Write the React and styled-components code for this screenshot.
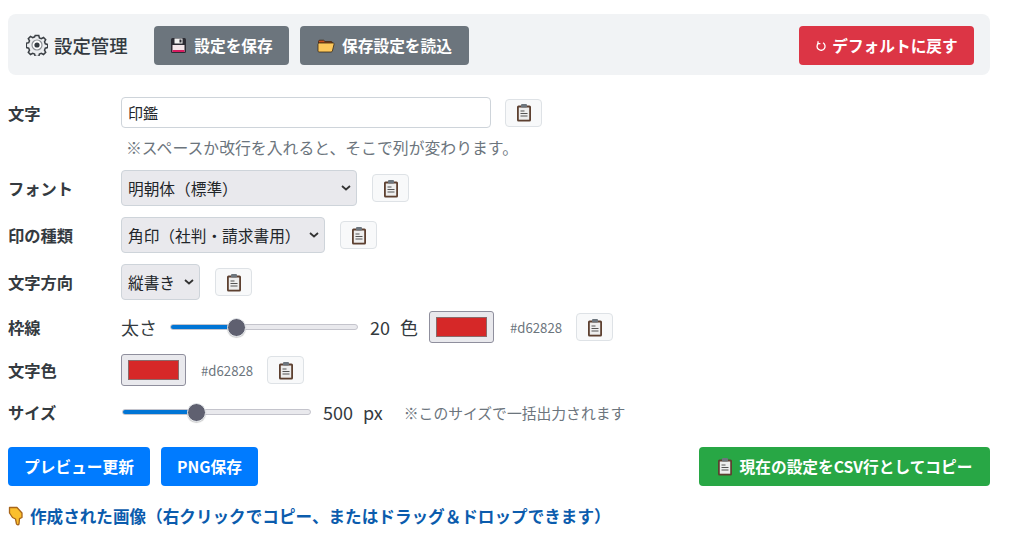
import React from 'react';
import styled, { createGlobalStyle } from 'styled-components';

const Global = createGlobalStyle`
  html, body { margin: 0; padding: 0; background: #fff; }
  body {
    font-family: "Noto Sans CJK JP", "Noto Sans", sans-serif;
    color: #212529;
    font-size: 16px;
    overflow: hidden;
  }
`;

const chevron = "data:image/svg+xml,%3Csvg xmlns='http://www.w3.org/2000/svg' width='10' height='6'%3E%3Cpath d='M1 1l4 3.500L9 1' fill='none' stroke='%23333' stroke-width='1.800'/%3E%3C/svg%3E";

const Page = styled.div`
  width: 982px;
  padding: 14px 0 0 8px;
`;

const Panel = styled.div`
  display: flex;
  align-items: center;
  height: 61px;
  box-sizing: border-box;
  padding: 2px 16px 0 18px;
  margin-bottom: 22px;
  background: #f1f3f5;
  border-radius: 8px;
`;

const PanelTitle = styled.div`
  display: flex;
  align-items: center;
  gap: 6px;
  width: 128px;
  margin-bottom: 2px;
  font-size: 18.400px;
  font-weight: 500;
  color: #343a40;
`;

const Btn = styled.button`
  display: inline-flex;
  align-items: center;
  justify-content: center;
  gap: ${p => p.$gap ?? 7}px;
  height: 39px;
  width: ${p => p.$w}px;
  margin-left: ${p => p.$ml || 0}px;
  padding: 0;
  border: 0;
  border-radius: 4px;
  background: ${p => p.$bg};
  color: #fff;
  font-family: inherit;
  font-size: 15.700px;
  font-weight: 700;
`;

const Row = styled.div`
  display: flex;
  align-items: center;
  min-height: ${p => p.$h || 36}px;
  margin-bottom: ${p => p.$mb ?? 11}px;
`;

const Label = styled.div`
  width: 113px;
  flex: none;
  font-size: 16.300px;
  font-weight: 700;
  color: #343a40;
`;

const TextInput = styled.input`
  width: 370px;
  height: 31px;
  box-sizing: border-box;
  padding: 0 6px;
  border: 1px solid #ced4da;
  border-radius: 4px;
  font-family: inherit;
  font-size: 15px;
  color: #212529;
`;

const Hint = styled.div`
  margin: 7px 0 10px 118px;
  font-size: 15.850px;
  line-height: 25px;
  color: #6c757d;
`;

const Select = styled.select`
  -webkit-appearance: none;
  appearance: none;
  width: ${p => p.$w}px;
  height: 36px;
  box-sizing: border-box;
  padding: 0 6px;
  border: 1px solid #ced4da;
  border-radius: 4px;
  background: #e9e9ed url("${chevron}") no-repeat right 5px center;
  font-family: inherit;
  font-size: 15.700px;
  color: #212529;
`;

const CopyBtn = styled.button`
  display: inline-flex;
  align-items: center;
  justify-content: center;
  width: 37px;
  height: 28px;
  margin-left: ${p => p.$ml}px;
  padding: 0;
  border: 1px solid #dee2e6;
  border-radius: 4px;
  background: #f8f9fa;
`;

const Text = styled.span`
  font-size: ${p => p.$size || 18}px;
  color: ${p => p.$color || '#343a40'};
  margin-left: ${p => p.$ml || 0}px;
`;

const Slider = styled.input`
  -webkit-appearance: none;
  appearance: none;
  width: ${p => p.$w}px;
  height: 20px;
  margin: 0 0 0 ${p => p.$ml || 0}px;
  background: transparent;
  &::-webkit-slider-runnable-track {
    height: 6px;
    border-radius: 3px;
    border: 1px solid #c4c4cc;
    background: linear-gradient(to right, #0075d5 var(--fill), #e9e9ed var(--fill));
  }
  &::-webkit-slider-thumb {
    -webkit-appearance: none;
    width: 19px;
    height: 19px;
    margin-top: -7.500px;
    border-radius: 50%;
    border: 1px solid #e9ecef;
    background: #5f6070;
    box-shadow: 0 1px 1px rgba(0,0,0,.2);
  }
`;

const Swatch = styled.div`
  width: 65px;
  height: 32px;
  box-sizing: border-box;
  margin-left: ${p => p.$ml || 0}px;
  padding: 5px 6px;
  border: 1px solid #8f8f9d;
  border-radius: 3px;
  background: #e9e9ed;
`;

const SwatchColor = styled.div`
  height: 100%;
  background: #d62828;
  border: 1px solid #8a6a6a;
  box-sizing: border-box;
`;

const Hex = styled.span`
  margin-left: ${p => p.$ml}px;
  font-size: 13.200px;
  color: #6c757d;
`;

const Actions = styled.div`
  display: flex;
  align-items: center;
  margin: 20px 0 18px;
`;

const Spacer = styled.div`
  flex: 1;
`;

const Heading = styled.div`
  display: flex;
  align-items: center;
  gap: 6px;
  font-size: 16.600px;
  font-weight: 700;
  color: #0b5cad;
`;

const GearIcon = () => (
  <svg width="22" height="22" viewBox="0 0 22 22">
    <path d="M9.200 1.500h3.600l.6 2.400 1.900.8 2.200-1.200 2.200 2.200-1.200 2.200.8 1.900 2.400.6v3.200l-2.400.6-.8 1.900 1.200 2.200-2.200 2.200-2.200-1.200-1.900.8-.6 2.400H9.200l-.6-2.400-1.900-.8-2.200 1.200-2.200-2.200 1.200-2.200-.8-1.900-2.400-.6V9.300l2.400-.6.8-1.900-1.200-2.200 2.200-2.200 2.200 1.200 1.900-.8z" fill="#eceef0" stroke="#3a3f44" strokeWidth="1.500" />
    <circle cx="11" cy="11" r="5" fill="#fff" stroke="#8d9196" strokeWidth="1.200" />
    <circle cx="11" cy="11" r="2.600" fill="#343a40" />
  </svg>
);

const FloppyIcon = () => (
  <svg width="17" height="17" viewBox="0 0 17 17">
    <rect x="1" y="1" width="15" height="15" rx="1.500" fill="#2b2b33" />
    <rect x="2.500" y="8" width="12" height="7" fill="#f3e6ea" />
    <rect x="2.500" y="13" width="12" height="2" fill="#d81b60" />
    <rect x="4.500" y="1.500" width="8" height="5" fill="#f1f1f1" />
    <rect x="9.500" y="2.500" width="2" height="3" fill="#2b2b33" />
  </svg>
);

const FolderIcon = () => (
  <svg width="18" height="15" viewBox="0 0 18 15">
    <path d="M1.500 5V3.500C1.500 2.700 2 2.200 2.800 2.200h3.700l1.500 1.300h6c.8 0 1.300.5 1.300 1.300V5z" fill="#c8501e" stroke="#3b2a12" strokeWidth=".8" />
    <path d="M1 13V6.500C1 5.700 1.600 5 2.500 5h13.500c.8 0 1.300.6 1 1.300L15.400 13c-.2.600-.7 1-1.300 1H2c-.6 0-1-.4-1-1z" fill="#fdc85c" stroke="#3b2a12" strokeWidth=".8" />
  </svg>
);

const RefreshIcon = () => (
  <svg width="12" height="12" viewBox="0 0 12 12" fill="none" stroke="#fff" strokeWidth="1.300">
    <path d="M3.300 3.400A4 4 0 1 0 8 2.800" />
    <path d="M3 1.200v2.400h2.400" />
  </svg>
);

const ClipIcon = () => (
  <svg width="16" height="19" viewBox="0 0 16 19">
    <rect x="1" y="2.500" width="14" height="16" rx="1.500" fill="#5d4030" />
    <rect x="2.800" y="4.500" width="10.400" height="12.200" fill="#eeeeee" />
    <rect x="5" y="1" width="6" height="3.500" rx="1" fill="#6c757d" />
    <path d="M4.500 8h4M4.500 10.500h7M4.500 13h7" stroke="#555" strokeWidth="1.100" />
  </svg>
);

const HandIcon = () => (
  <svg width="16" height="20" viewBox="0 0 16 20">
    <path d="M1.500 1.500h7.500l5 5.500v4.500l-2.500 1.200-.5 5.300c-.3 1-2 1-2.500 0L7.500 13 4.500 11.500 1.500 7z" fill="#fbbf2d" stroke="#a8651a" strokeWidth="1.300" strokeLinejoin="round" />
  </svg>
);

export default function App() {
  return (
    <Page>
      <Global />
      <Panel>
        <PanelTitle><GearIcon />設定管理</PanelTitle>
        <Btn $bg="#6c757d" $w={135}><FloppyIcon />設定を保存</Btn>
        <Btn $bg="#6c757d" $w={169} $ml={11}><FolderIcon />保存設定を読込</Btn>
        <Spacer />
        <Btn $bg="#dc3545" $w={175} $gap={5}><RefreshIcon />デフォルトに戻す</Btn>
      </Panel>

      <Row $h={31} $mb={0}>
        <Label>文字</Label>
        <TextInput defaultValue="印鑑" />
        <CopyBtn $ml={14}><ClipIcon /></CopyBtn>
      </Row>
      <Hint>※スペースか改行を入れると、そこで列が変わります。</Hint>

      <Row>
        <Label>フォント</Label>
        <Select $w={236}><option>明朝体（標準）</option></Select>
        <CopyBtn $ml={15}><ClipIcon /></CopyBtn>
      </Row>
      <Row>
        <Label>印の種類</Label>
        <Select $w={204}><option>角印（社判・請求書用）</option></Select>
        <CopyBtn $ml={15}><ClipIcon /></CopyBtn>
      </Row>
      <Row>
        <Label>文字方向</Label>
        <Select $w={79}><option>縦書き</option></Select>
        <CopyBtn $ml={15}><ClipIcon /></CopyBtn>
      </Row>
      <Row $h={32}>
        <Label>枠線</Label>
        <Text>太さ</Text>
        <Slider type="range" min="0" max="60" defaultValue="20" $w={188} $ml={13} style={{ '--fill': '35%' }} />
        <Text $ml={12}>20</Text>
        <Text $ml={10}>色</Text>
        <Swatch $ml={11}><SwatchColor /></Swatch>
        <Hex $ml={16}>#d62828</Hex>
        <CopyBtn $ml={14}><ClipIcon /></CopyBtn>
      </Row>
      <Row $h={32}>
        <Label>文字色</Label>
        <Swatch><SwatchColor /></Swatch>
        <Hex $ml={15}>#d62828</Hex>
        <CopyBtn $ml={14}><ClipIcon /></CopyBtn>
      </Row>
      <Row $h={30} $mb={0}>
        <Label>サイズ</Label>
        <Slider type="range" min="100" max="1150" defaultValue="500" $w={189} $ml={1} style={{ '--fill': '39%' }} />
        <Text $ml={12}>500</Text>
        <Text $ml={10}>px</Text>
        <Text $ml={21} $size={14.8} $color="#6c757d">※このサイズで一括出力されます</Text>
      </Row>

      <Actions>
        <Btn $bg="#007bff" $w={142}>プレビュー更新</Btn>
        <Btn $bg="#007bff" $w={97} $ml={11}>PNG保存</Btn>
        <Spacer />
        <Btn $bg="#28a745" $w={291}><ClipIcon />現在の設定をCSV行としてコピー</Btn>
      </Actions>

      <Heading><HandIcon />作成された画像（右クリックでコピー、またはドラッグ＆ドロップできます）</Heading>
    </Page>
  );
}
